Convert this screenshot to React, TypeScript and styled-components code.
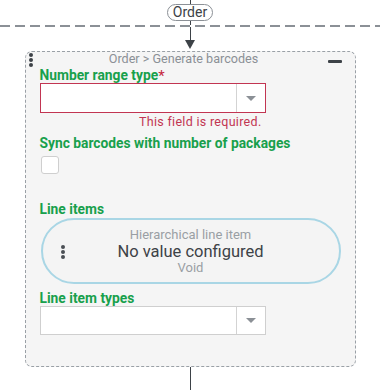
import * as React from 'react';
import styled, { createGlobalStyle } from 'styled-components';

const GlobalStyle = createGlobalStyle`
  html, body {
    margin: 0;
    padding: 0;
    background: #ffffff;
    font-family: Roboto, "Liberation Sans", sans-serif;
  }
`;

const Canvas = styled.div`
  width: 380px;
  height: 390px;
  overflow: hidden;
  display: flex;
  flex-direction: column;
  align-items: center;
`;

const Stem = styled.div<{ $h: number }>`
  width: 1px;
  height: ${p => p.$h}px;
  background: #3d4247;
  flex-shrink: 0;
`;

const SectionPill = styled.div`
  box-sizing: border-box;
  height: 17px;
  padding: 0 5px;
  border: 1px solid #8b9096;
  border-radius: 9px;
  font-size: 14px;
  line-height: 15px;
  color: #3d4247;
  background: #fff;
`;

const DashedDivider = styled.div`
  align-self: stretch;
  height: 2px;
  flex-shrink: 0;
  background: repeating-linear-gradient(to right, #8b9096 0 10px, transparent 10px 15px);
`;

const Arrow = styled.div`
  width: 0;
  height: 0;
  border-left: 5px solid transparent;
  border-right: 5px solid transparent;
  border-top: 9px solid #3d4247;
  margin-bottom: 2px;
`;

const Card = styled.div`
  box-sizing: border-box;
  width: 331px;
  height: 316px;
  border: 1px dashed #9aa0a6;
  border-radius: 7px;
  background: #f5f5f5;
  display: flex;
  flex-direction: column;
  flex-shrink: 0;
`;

const CardHeader = styled.div`
  display: flex;
  align-items: flex-start;
  height: 15px;
`;

const DotsBox = styled.div`
  width: 14px;
  padding: 1px 0 0 3px;
  box-sizing: border-box;
`;

const Dots = styled.div<{ $color?: string }>`
  display: flex;
  flex-direction: column;
  gap: 1px;

  span {
    width: 4px;
    height: 4px;
    border-radius: 50%;
    background: ${p => p.$color || '#3d4247'};
  }
`;

const Breadcrumb = styled.div`
  flex: 1;
  text-align: center;
  font-size: 12.6px;
  line-height: 14px;
  color: #8b9096;
`;

const CollapseButton = styled.div`
  width: 27px;
  height: 15px;
  display: flex;
  align-items: center;
  padding-top: 3px;
  box-sizing: border-box;

  span {
    width: 14px;
    height: 3px;
    border-radius: 1px;
    background: #3d4247;
  }
`;

const CardBody = styled.div`
  padding: 0 14px;
  display: flex;
  flex-direction: column;
  align-items: flex-start;
`;

const Label = styled.div<{ $mt?: number }>`
  margin-top: ${p => p.$mt || 0}px;
  font-size: 13.8px;
  line-height: 16px;
  font-weight: 700;
  color: #18a04c;

  sup {
    color: #c6283f;
    font-size: 15px;
    line-height: 0;
    vertical-align: -1px;
    font-weight: 400;
  }
`;

const Select = styled.div<{ $invalid?: boolean }>`
  box-sizing: border-box;
  width: 226px;
  height: ${p => (p.$invalid ? 30 : 29)}px;
  background: #fff;
  border: 1px solid ${p => (p.$invalid ? '#c23552' : '#cfcfcf')};
  display: flex;
`;

const SelectValue = styled.div`
  flex: 1;
`;

const SelectToggle = styled.div`
  width: 28px;
  border-left: 1px solid #d3d3d3;
  display: flex;
  align-items: center;
  justify-content: center;

  &::after {
    content: '';
    width: 0;
    height: 0;
    border-left: 5px solid transparent;
    border-right: 5px solid transparent;
    border-top: 5px solid #8b9096;
  }
`;

const ErrorText = styled.div`
  width: 222px;
  text-align: right;
  margin-top: 1px;
  font-size: 12.5px;
  line-height: 15px;
  letter-spacing: 0.3px;
  color: #c23552;
`;

const Checkbox = styled.div`
  box-sizing: border-box;
  width: 18px;
  height: 18px;
  margin: 5px 0 0 1px;
  background: #fff;
  border: 1px solid #cfcfcf;
  border-radius: 3px;
`;

const LineItem = styled.div`
  box-sizing: border-box;
  position: relative;
  width: 300px;
  height: 66px;
  margin: 1px 0 0 1px;
  border: 2px solid #a9d6e5;
  border-radius: 33px;
  background: #f4f4f4;
  display: flex;
  flex-direction: column;
  align-items: center;
  justify-content: center;
`;

const LineItemDots = styled.div`
  position: absolute;
  left: 18px;
  top: 25px;
`;

const MetaText = styled.div`
  font-size: 13px;
  line-height: 16px;
  color: #9a9fa4;
`;

const ValueText = styled.div`
  font-size: 16.5px;
  line-height: 17px;
  color: #3d4247;
`;

const Order: React.FC = () => (
  <>
    <Stem $h={4} />
    <SectionPill>Order</SectionPill>
    <Stem $h={4} />
    <DashedDivider />
    <Stem $h={13} />
    <Arrow />
  </>
);

export default function App() {
  return (
    <Canvas>
      <GlobalStyle />
      <Order />
      <Card>
        <CardHeader>
          <DotsBox>
            <Dots>
              <span />
              <span />
              <span />
            </Dots>
          </DotsBox>
          <Breadcrumb>Order &gt; Generate barcodes</Breadcrumb>
          <CollapseButton>
            <span />
          </CollapseButton>
        </CardHeader>
        <CardBody>
          <Label>
            Number range type<sup>*</sup>
          </Label>
          <Select $invalid>
            <SelectValue />
            <SelectToggle />
          </Select>
          <ErrorText>This field is required.</ErrorText>

          <Label $mt={6}>Sync barcodes with number of packages</Label>
          <Checkbox />

          <Label $mt={27}>Line items</Label>
          <LineItem>
            <LineItemDots>
              <Dots $color="#4a4f54">
                <span />
                <span />
                <span />
              </Dots>
            </LineItemDots>
            <MetaText>Hierarchical line item</MetaText>
            <ValueText>No value configured</ValueText>
            <MetaText>Void</MetaText>
          </LineItem>

          <Label $mt={6}>Line item types</Label>
          <Select>
            <SelectValue />
            <SelectToggle />
          </Select>
        </CardBody>
      </Card>
      <Stem $h={30} />
    </Canvas>
  );
}
